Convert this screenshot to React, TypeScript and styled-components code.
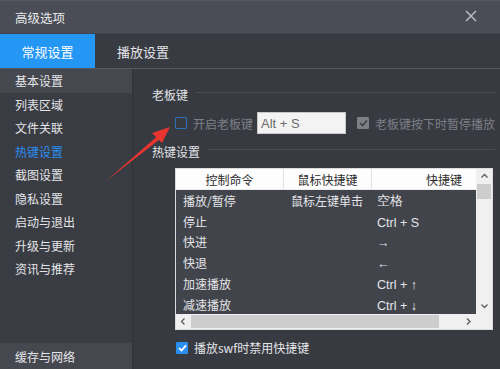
import React from 'react';
import styled, { createGlobalStyle } from 'styled-components';

const GlobalStyle = createGlobalStyle`
  html, body {
    margin: 0;
    padding: 0;
    background: #383a41;
  }
  * {
    box-sizing: border-box;
  }
`;

const Window = styled.div`
  position: relative;
  width: 500px;
  height: 369px;
  overflow: hidden;
  display: flex;
  flex-direction: column;
  font-family: "Noto Sans CJK SC", "Noto Sans", sans-serif;
  font-size: 12px;
  color: #e2e3e6;
  background: #383a41;
`;

const TitleBar = styled.div`
  height: 33px;
  flex-shrink: 0;
  display: flex;
  align-items: center;
  justify-content: space-between;
  padding: 0 22px 0 15px;
  background: #4a4d56;
  border-top: 1px solid #55585f;
  font-size: 12.5px;
  color: #e8e9ec;
`;

const CloseButton = styled.div`
  width: 14px;
  height: 14px;
  display: flex;
  align-items: center;
  justify-content: center;
  color: #b9bbc0;
  margin-top: -3px;
`;

const TabBar = styled.div`
  height: 35px;
  flex-shrink: 0;
  display: flex;
  background: #393b43;
  border-top: 1px solid #41434b;
`;

const Tab = styled.div<{ $active?: boolean }>`
  width: 95px;
  display: flex;
  align-items: center;
  justify-content: ${p => (p.$active ? 'center' : 'flex-start')};
  font-size: 13px;
  color: ${p => (p.$active ? '#ffffff' : '#e4e5e8')};
  background: ${p => (p.$active ? '#2496f3' : 'transparent')};
  padding-left: ${p => (p.$active ? '0' : '22px')};
`;

const Body = styled.div`
  flex: 1;
  display: flex;
  min-height: 0;
  border-top: 1px solid #55585f;
`;

const Sidebar = styled.div`
  width: 133px;
  flex-shrink: 0;
  display: flex;
  flex-direction: column;
  background: #3a3c43;
  border-right: 1px solid #2f3136;
`;

const NavItem = styled.div<{ $selected?: boolean; $active?: boolean }>`
  height: 23.5px;
  display: flex;
  align-items: center;
  padding-left: 15px;
  font-size: 12px;
  color: ${p => (p.$active ? '#2a8ef0' : '#e4e5e8')};
  background: ${p => (p.$selected ? '#46484f' : 'transparent')};
`;

const NavSpacer = styled.div`
  flex: 1;
`;

const NavBottom = styled(NavItem)`
  height: 26px;
  background: #46484f;
`;

const Content = styled.div`
  flex: 1;
  display: flex;
  flex-direction: column;
  padding: 15px 8px 0 19px;
  background: #383a41;
`;

const SectionHead = styled.div`
  display: flex;
  align-items: center;
  gap: 8px;
  height: 20px;
  font-size: 12px;
  color: #e2e3e6;
`;

const SectionLine = styled.div`
  flex: 1;
  height: 1px;
  background: #4b4d55;
  margin-top: -3px;
`;

const BossRow = styled.div`
  display: flex;
  align-items: center;
  height: 22px;
  margin: 8px 0 7px 23px;
`;

const Check = styled.span<{ $checked?: boolean; $disabled?: boolean }>`
  width: 12px;
  height: 12px;
  flex-shrink: 0;
  display: inline-flex;
  align-items: center;
  justify-content: center;
  border: 1px solid ${p => (p.$disabled ? '#7e8087' : p.$checked ? '#2b8ff0' : '#2d6fb8')};
  background: ${p => (p.$disabled ? '#7e8087' : p.$checked ? '#2b8ff0' : 'transparent')};
  border-radius: 1px;
`;

const Label = styled.span<{ $dim?: boolean }>`
  margin-left: 6px;
  font-size: 12px;
  color: ${p => (p.$dim ? '#7d7f87' : '#e4e5e8')};
  white-space: nowrap;
`;

const KeyInput = styled.div`
  width: 89px;
  height: 22px;
  margin: 0 11px 0 4px;
  display: flex;
  align-items: center;
  padding-left: 3px;
  background: #f3f3f3;
  border: 1px solid #c8c8c8;
  color: #6a6a6a;
  font-family: "Liberation Sans", Arial, sans-serif;
  font-size: 13px;
`;

const TableBox = styled.div`
  width: 318px;
  height: 162px;
  margin: 7px 0 0 23px;
  display: grid;
  grid-template-columns: 1fr 16px;
  grid-template-rows: 1fr 15px;
  background: #f0f0f0;
  border: 1px solid #dcdcdc;
`;

const TableArea = styled.div`
  display: flex;
  flex-direction: column;
  background: #42444c;
  overflow: hidden;
`;

const Row = styled.div<{ $head?: boolean }>`
  display: grid;
  grid-template-columns: 108px 88px 1fr;
  height: ${p => (p.$head ? '21px' : '20.8px')};
  flex-shrink: 0;
  align-items: center;
  background: ${p => (p.$head ? '#fdfdfd' : 'transparent')};
  color: ${p => (p.$head ? '#2b2b2b' : '#e4e5e8')};
  font-size: 12px;
`;

const HeadCell = styled.div<{ $last?: boolean }>`
  height: 100%;
  display: flex;
  align-items: center;
  justify-content: ${p => (p.$last ? 'flex-end' : 'center')};
  padding-right: ${p => (p.$last ? '14px' : '0')};
  border-right: ${p => (p.$last ? 'none' : '1px solid #e3e3e3')};
  border-bottom: 1px solid #eaeaea;
`;

const Cell = styled.div<{ $pad: number }>`
  padding-left: ${p => p.$pad}px;
  white-space: nowrap;
`;

const Mono = styled.span`
  font-family: "Liberation Sans", Arial, sans-serif;
  font-size: 12.5px;
`;

const VScroll = styled.div`
  display: flex;
  flex-direction: column;
  align-items: center;
  background: #f0f0f0;
`;

const HScroll = styled.div`
  display: flex;
  align-items: center;
  background: #f0f0f0;
`;

const Arrow = styled.div`
  width: 15px;
  height: 15px;
  flex-shrink: 0;
  display: flex;
  align-items: center;
  justify-content: center;
  color: #606060;
`;

const VThumb = styled.div`
  width: 14px;
  height: 15px;
  background: #cdcdcd;
`;

const HThumb = styled.div`
  width: 248px;
  height: 13px;
  background: #cdcdcd;
`;

const Fill = styled.div`
  flex: 1;
`;

const SwfRow = styled.div`
  display: flex;
  align-items: center;
  margin: 9px 0 0 24px;
`;

const Overlay = styled.svg`
  position: absolute;
  left: 0;
  top: 0;
  pointer-events: none;
`;

const Tick = ({ color }: { color: string }) => (
  <svg width="9" height="8" viewBox="0 0 9 8">
    <path d="M1 4.2 L3.5 6.5 L8 1.3" fill="none" stroke={color} strokeWidth="1.8" />
  </svg>
);

const Chevron = ({ dir }: { dir: 'up' | 'down' | 'left' | 'right' }) => {
  const paths = {
    up: 'M1.5 5.5 L4.5 2.5 L7.5 5.5',
    down: 'M1.5 2.5 L4.5 5.5 L7.5 2.5',
    left: 'M5.5 1.5 L2.5 4.5 L5.5 7.5',
    right: 'M3 1.5 L6 4.5 L3 7.5',
  };
  return (
    <svg width="9" height="9" viewBox="0 0 9 9">
      <path d={paths[dir]} fill="none" stroke="currentColor" strokeWidth="1.4" />
    </svg>
  );
};

const navItems = ['基本设置', '列表区域', '文件关联', '热键设置', '截图设置', '隐私设置', '启动与退出', '升级与更新', '资讯与推荐'];

const hotkeys = [
  { cmd: '播放/暂停', mouse: '鼠标左键单击', key: '空格' },
  { cmd: '停止', mouse: '', key: 'Ctrl + S' },
  { cmd: '快进', mouse: '', key: '→' },
  { cmd: '快退', mouse: '', key: '←' },
  { cmd: '加速播放', mouse: '', key: 'Ctrl + ↑' },
  { cmd: '减速播放', mouse: '', key: 'Ctrl + ↓' },
];

const App: React.FC = () => {
  return (
    <Window>
      <GlobalStyle />
      <TitleBar>
        <span>高级选项</span>
        <CloseButton>
          <svg width="12" height="12" viewBox="0 0 12 12">
            <path d="M1 1 L11 11 M11 1 L1 11" stroke="currentColor" strokeWidth="1.5" />
          </svg>
        </CloseButton>
      </TitleBar>
      <TabBar>
        <Tab $active>常规设置</Tab>
        <Tab>播放设置</Tab>
      </TabBar>
      <Body>
        <Sidebar>
          {navItems.map((name, i) => (
            <NavItem key={name} $selected={i === 0} $active={name === '热键设置'}>
              {name}
            </NavItem>
          ))}
          <NavSpacer />
          <NavBottom>缓存与网络</NavBottom>
        </Sidebar>
        <Content>
          <SectionHead>
            老板键
            <SectionLine />
          </SectionHead>
          <BossRow>
            <Check />
            <Label $dim>开启老板键</Label>
            <KeyInput>Alt + S</KeyInput>
            <Check $checked $disabled>
              <Tick color="#45474e" />
            </Check>
            <Label $dim>老板键按下时暂停播放</Label>
          </BossRow>
          <SectionHead>
            热键设置
            <SectionLine />
          </SectionHead>
          <TableBox>
            <TableArea>
              <Row $head>
                <HeadCell>控制命令</HeadCell>
                <HeadCell>鼠标快捷键</HeadCell>
                <HeadCell $last>快捷键</HeadCell>
              </Row>
              {hotkeys.map(h => (
                <Row key={h.cmd}>
                  <Cell $pad={7}>{h.cmd}</Cell>
                  <Cell $pad={7}>{h.mouse}</Cell>
                  <Cell $pad={5}>
                    <Mono>{h.key}</Mono>
                  </Cell>
                </Row>
              ))}
            </TableArea>
            <VScroll>
              <Arrow>
                <Chevron dir="up" />
              </Arrow>
              <VThumb />
              <Fill />
              <Arrow>
                <Chevron dir="down" />
              </Arrow>
            </VScroll>
            <HScroll>
              <Arrow>
                <Chevron dir="left" />
              </Arrow>
              <HThumb />
              <Fill />
              <Arrow>
                <Chevron dir="right" />
              </Arrow>
            </HScroll>
            <VScroll />
          </TableBox>
          <SwfRow>
            <Check $checked>
              <Tick color="#ffffff" />
            </Check>
            <Label>播放swf时禁用快捷键</Label>
          </SwfRow>
        </Content>
      </Body>
      <Overlay width="500" height="369" viewBox="0 0 500 369">
        <path d="M106 181 L157 136.5 L159.5 139.5 Z" fill="#e8352f" />
        <path d="M170 127 L152 133 L162 143 Z" fill="#e8352f" />
      </Overlay>
    </Window>
  );
};

export default App;
